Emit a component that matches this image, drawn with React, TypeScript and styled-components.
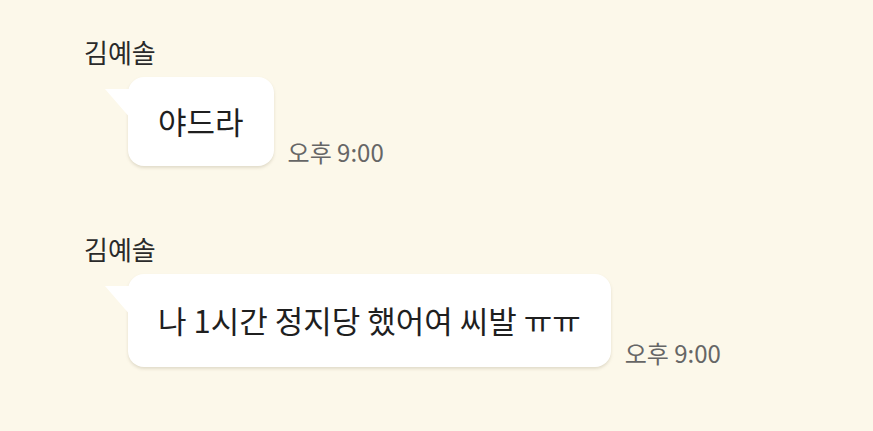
import React from "react";
import styled, { createGlobalStyle } from "styled-components";

const Global = createGlobalStyle`
  html, body { margin: 0; padding: 0; }
  body {
    background: #fcf8ea;
    font-family: "Noto Sans CJK KR", "Noto Sans", sans-serif;
    color: #222;
  }
`;

const Page = styled.div`
  width: 873px;
  height: 431px;
  box-sizing: border-box;
  padding: 36px 0 0 84px;
  display: flex;
  flex-direction: column;
  gap: 67px;
  background: #fcf8ea;
  overflow: hidden;
`;

const Message = styled.div`
  display: flex;
  flex-direction: column;
  gap: 10px;
`;

const Name = styled.div`
  font-size: 26px;
  line-height: 31px;
  color: #2a2a2a;
`;

const Row = styled.div`
  display: flex;
  align-items: flex-end;
  gap: 14px;
  padding-left: 44px;
`;

const Bubble = styled.div<{ $h: number }>`
  position: relative;
  background: #fff;
  border-radius: 16px;
  height: ${(p) => p.$h}px;
  box-sizing: border-box;
  padding: 0 30px 2px;
  display: flex;
  align-items: center;
  font-size: 31px;
  color: #1f1f1f;
  white-space: nowrap;
  box-shadow: 0 2px 3px rgba(150, 140, 110, 0.25);
  &::before {
    content: "";
    position: absolute;
    left: -23px;
    top: 12px;
    width: 26px;
    height: 30px;
    background: #fff;
    clip-path: polygon(0 0, 100% 0, 100% 100%);
  }
`;

const Time = styled.div`
  font-size: 24px;
  color: #666;
  line-height: 26px;
  margin-bottom: 1px;
  white-space: nowrap;
`;

export default function App() {
  return (
    <>
      <Global />
      <Page>
        <Message>
          <Name>김예솔</Name>
          <Row>
            <Bubble $h={89}>야드라</Bubble>
            <Time>오후 9:00</Time>
          </Row>
        </Message>
        <Message>
          <Name>김예솔</Name>
          <Row>
            <Bubble $h={93}>나 1시간 정지당 했어여 씨발 ㅠㅠ</Bubble>
            <Time>오후 9:00</Time>
          </Row>
        </Message>
      </Page>
    </>
  );
}
